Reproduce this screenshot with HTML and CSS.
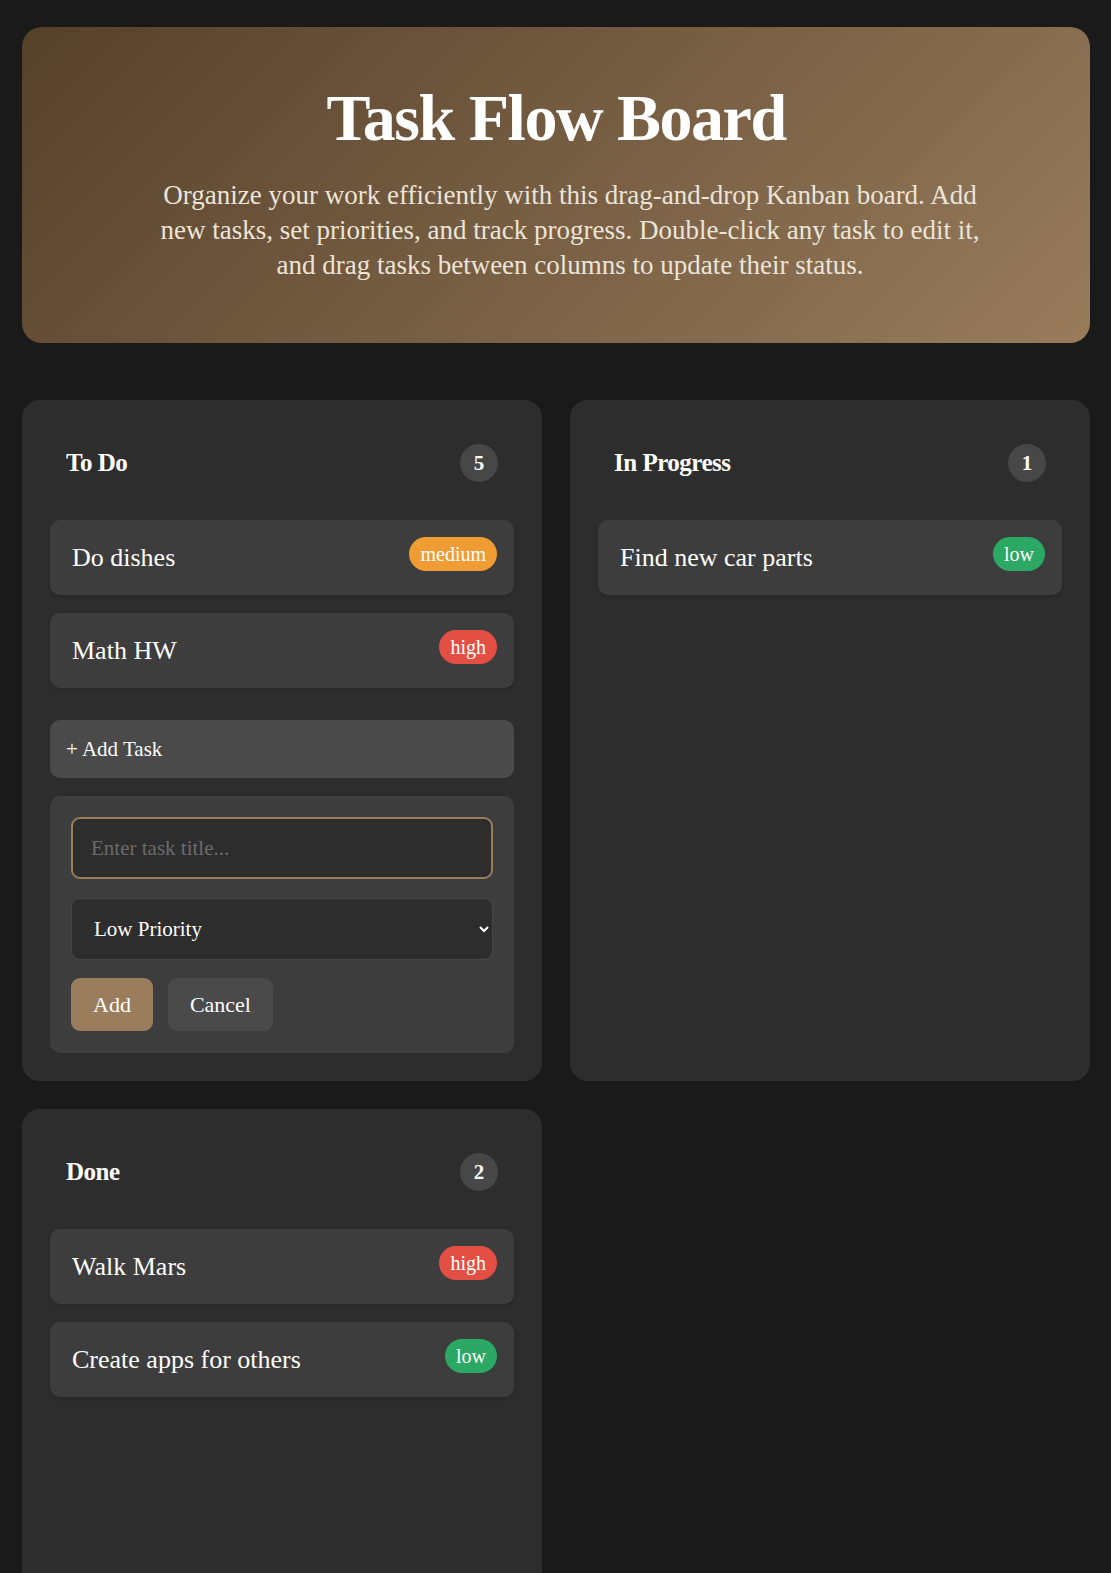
FILE: index.html
```html
<!DOCTYPE html>
<html lang="en">
<head>
    <meta charset="UTF-8">
    <meta name="viewport" content="width=device-width, initial-scale=1.0">
    <title>Task Flow Board</title>
    <link rel="stylesheet" href="styles.css">
</head>
<body>

    <header class="hero">
        <h1>Task Flow Board</h1>
        <p>Organize your work efficiently with this drag-and-drop Kanban board. Add new tasks, set priorities, and track progress. Double-click any task to edit it, and drag tasks between columns to update their status.</p>
    </header>

    <main class="board">
        <section class="column">
            <div class="column-header">
                <h2>To Do</h2>
                <span class="count">5</span>
            </div>
            <div class="task-list">
                <div class="task">
                    <span class="task-title">Do dishes</span>
                    <span class="priority medium">medium</span>
                </div>
                <div class="task">
                    <span class="task-title">Math HW</span>
                    <span class="priority high">high</span>
                </div>
            </div>
            <button class="add-task">+ Add Task</button>
            <form class="task-form">
                <input type="text" class="task-input" placeholder="Enter task title...">
                <select class="task-select">
                    <option>Low Priority</option>
                    <option>Medium Priority</option>
                    <option>High Priority</option>
                </select>
                <div class="form-buttons">
                    <button type="button" class="btn-add">Add</button>
                    <button type="button" class="btn-cancel">Cancel</button>
                </div>
            </form>
        </section>

        <section class="column">
            <div class="column-header">
                <h2>In Progress</h2>
                <span class="count">1</span>
            </div>
            <div class="task-list">
                <div class="task">
                    <span class="task-title">Find new car parts</span>
                    <span class="priority low">low</span>
                </div>
            </div>
        </section>

        <section class="column">
            <div class="column-header">
                <h2>Done</h2>
                <span class="count">2</span>
            </div>
            <div class="task-list">
                <div class="task">
                    <span class="task-title">Walk Mars</span>
                    <span class="priority high">high</span>
                </div>
                <div class="task">
                    <span class="task-title">Create apps for others</span>
                    <span class="priority low">low</span>
                </div>
            </div>
        </section>
    </main>

</body>
</html>
```

FILE: styles.css
```css
:root {
    color-scheme: dark;
}
body {
    font-family: "Liberation Serif", "Times New Roman", serif;
    background-color: #1a1a1a;
    color: #fff;
    margin: 0;
    padding: 27px 21px 40px 22px;
}
.hero {
    background: linear-gradient(135deg, #55402a 0%, #987c5c 100%);
    border-radius: 20px;
    text-align: center;
    padding: 51px 40px 60px;
}
.hero h1 {
    margin: 0;
    font-size: 66px;
    line-height: 1.2;
    letter-spacing: -1.5px;
    font-weight: bold;
}
.hero p {
    max-width: 840px;
    margin: 21px auto 0;
    padding-left: 28px;
    font-size: 27px;
    line-height: 35px;
    color: #ece4d8;
}
.board {
    display: grid;
    grid-template-columns: 1fr 1fr;
    gap: 28px;
    margin-top: 57px;
}
.column {
    background-color: #2d2d2d;
    border-radius: 18px;
    padding: 28px;
    min-height: 500px;
}
.column-header {
    display: flex;
    justify-content: space-between;
    align-items: center;
    padding: 16px;
    margin-bottom: 22px;
}
.column-header h2 {
    margin: 0;
    font-size: 25px;
    letter-spacing: -0.5px;
}
.count {
    background-color: #474747;
    border-radius: 20px;
    min-width: 14px;
    padding: 6px 12px;
    font-size: 21px;
    line-height: 26px;
    font-weight: bold;
    text-align: center;
}
.task-list {
    display: flex;
    flex-direction: column;
    gap: 18px;
}
.task {
    display: flex;
    justify-content: space-between;
    align-items: flex-start;
    background-color: #3d3d3d;
    border-radius: 10px;
    padding: 17px 17px 17px 22px;
    box-shadow: 0 2px 4px rgba(0, 0, 0, 0.15);
}
.task-title {
    font-size: 26px;
    line-height: 41px;
}
.priority {
    border-radius: 17px;
    padding: 4px 11px;
    font-size: 20px;
    line-height: 26px;
}
.priority.medium {
    background-color: #f09c35;
}
.priority.high {
    background-color: #e44f43;
}
.priority.low {
    background-color: #2aa864;
}
.add-task {
    display: block;
    width: 100%;
    margin-top: 32px;
    background-color: #4a4a4a;
    color: #fff;
    border: none;
    border-radius: 10px;
    padding: 16px;
    font-family: inherit;
    font-size: 21px;
    line-height: 26px;
    text-align: left;
    cursor: pointer;
}
.task-form {
    margin-top: 18px;
    background-color: #3d3d3d;
    border-radius: 10px;
    padding: 21px 21px 22px;
    display: flex;
    flex-direction: column;
    gap: 19px;
}
.task-input, .task-select {
    box-sizing: border-box;
    width: 100%;
    height: 62px;
    background-color: #2d2d2d;
    color: #fff;
    font-family: inherit;
    font-size: 21px;
    border-radius: 9px;
}
.task-input {
    border: 2px solid #9a7d5c;
    padding: 0 18px;
    outline: none;
}
.task-input::placeholder {
    color: #6b6b6b;
}
.task-select {
    border: 1px solid #474747;
    padding: 0 18px;
}
.form-buttons {
    display: flex;
    gap: 15px;
    margin-top: -1px;
}
.form-buttons button {
    border: none;
    border-radius: 9px;
    color: #fff;
    font-family: inherit;
    font-size: 22px;
    line-height: 25px;
    padding: 14px 22px;
    cursor: pointer;
}
.btn-add {
    background-color: #9a7d5c;
}
.btn-cancel {
    background-color: #4a4a4a;
}
```
